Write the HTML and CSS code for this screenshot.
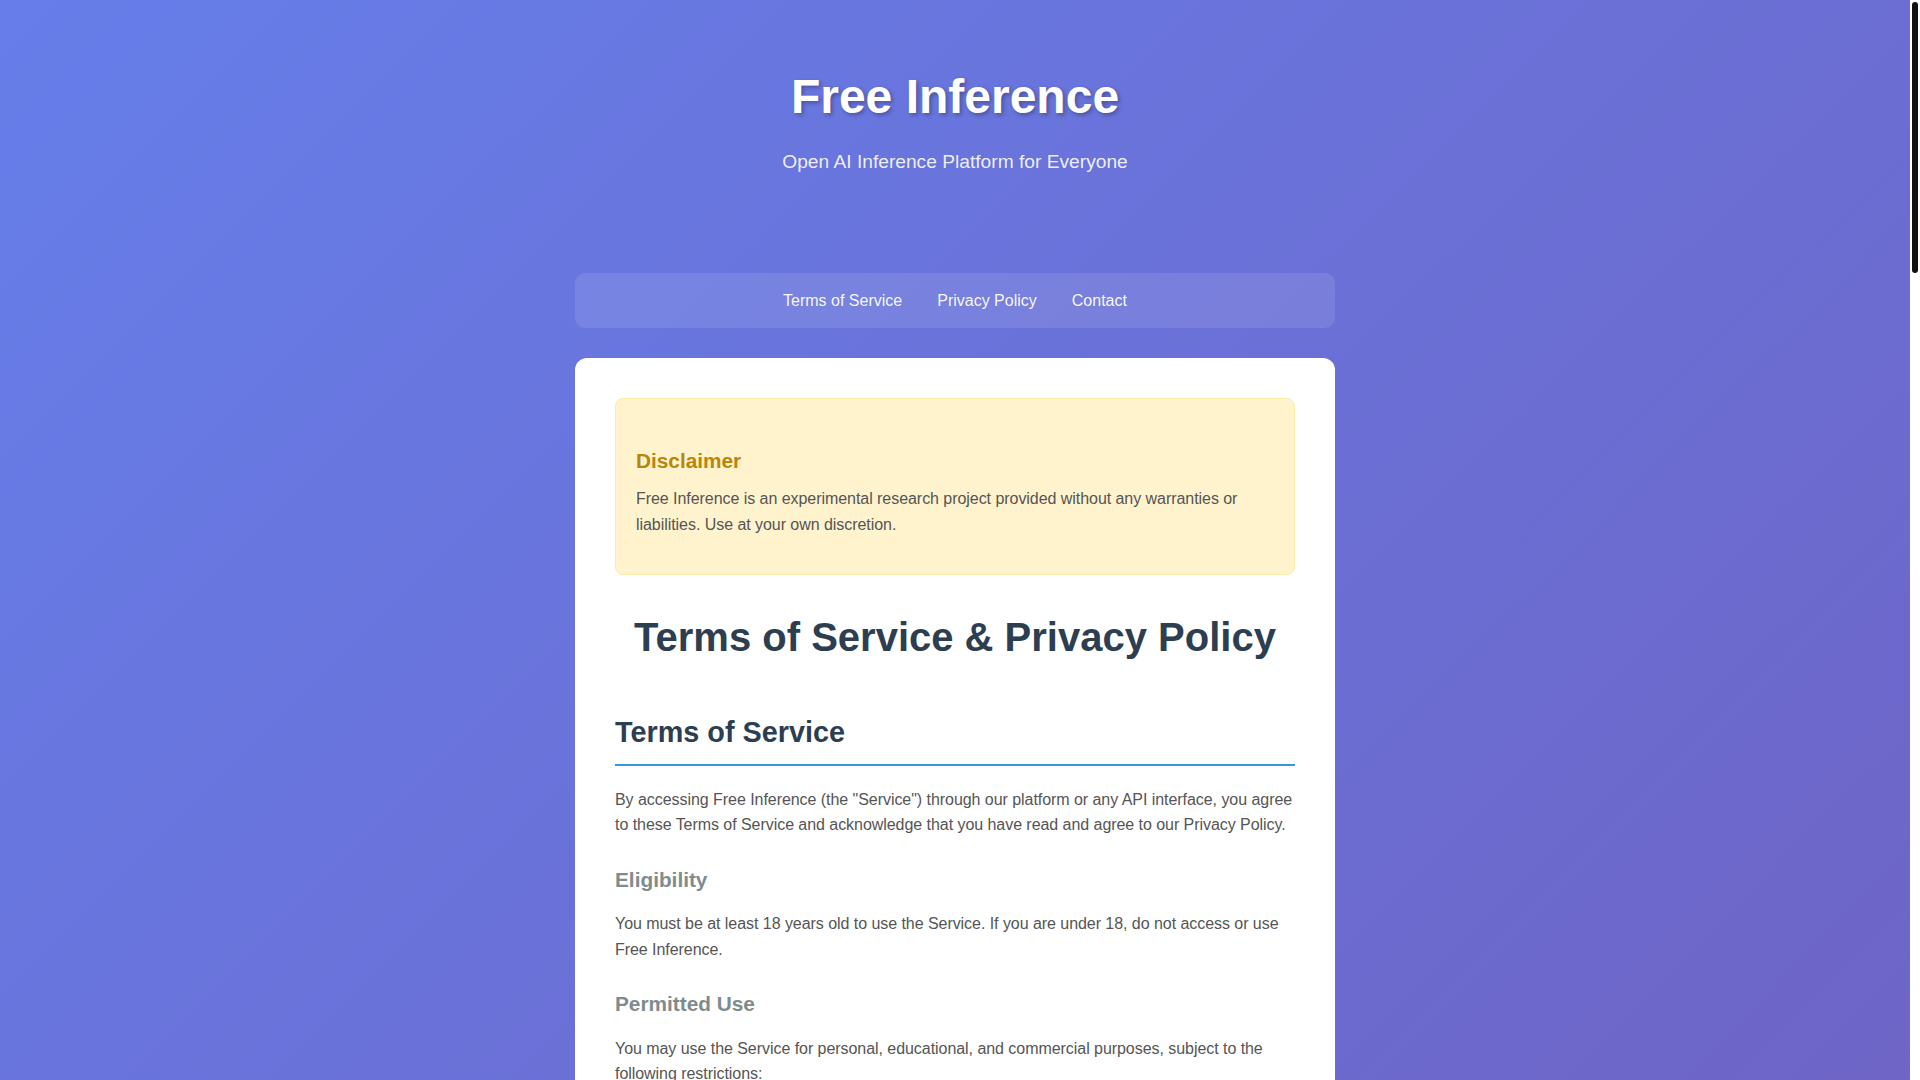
FILE: index.html
```html
<!DOCTYPE html>
<html lang="en">
<head>
<meta charset="utf-8">
<title>Free Inference - Terms of Service &amp; Privacy Policy</title>
<link rel="stylesheet" href="styles.css">
</head>
<body>
<div class="page">
  <header class="site-header">
    <h1 class="site-title">Free Inference</h1>
    <p class="site-tagline">Open AI Inference Platform for Everyone</p>
  </header>

  <nav class="site-nav">
    <a href="#terms">Terms of Service</a>
    <a href="#privacy">Privacy Policy</a>
    <a href="#contact">Contact</a>
  </nav>

  <main class="card">
    <section class="disclaimer">
      <h3 class="disclaimer-title">Disclaimer</h3>
      <p class="disclaimer-text">Free Inference is an experimental research project provided without any warranties or liabilities. Use at your own discretion.</p>
    </section>

    <h1 class="doc-title">Terms of Service &amp; Privacy Policy</h1>

    <h2 id="terms">Terms of Service</h2>
    <p>By accessing Free Inference (the "Service") through our platform or any API interface, you agree to these Terms of Service and acknowledge that you have read and agree to our Privacy Policy.</p>

    <h3>Eligibility</h3>
    <p>You must be at least 18 years old to use the Service. If you are under 18, do not access or use Free Inference.</p>

    <h3>Permitted Use</h3>
    <p>You may use the Service for personal, educational, and commercial purposes, subject to the following restrictions:</p>
    <ul>
      <li>Do not use the Service for any illegal, harmful, fraudulent, or abusive purpose.</li>
      <li>Do not attempt to disrupt, overload, or compromise the Service or its underlying infrastructure.</li>
      <li>Do not generate content that infringes intellectual property rights or violates the privacy of others.</li>
      <li>Do not use automated means to circumvent rate limits or access controls.</li>
      <li>Do not resell or redistribute access to the Service without prior written permission.</li>
    </ul>

    <h3>API Keys and Accounts</h3>
    <p>You are responsible for keeping your API keys confidential and for all activity that occurs under your keys. Notify us immediately if you believe a key has been compromised.</p>

    <h3>Service Availability</h3>
    <p>The Service is provided on a best-effort basis. We may modify, suspend, rate-limit, or discontinue any part of the Service at any time, with or without notice, and we do not guarantee uptime, latency, or model availability.</p>

    <h3>Model Outputs</h3>
    <p>Outputs are generated by machine learning models and may be inaccurate, incomplete, offensive, or otherwise unsuitable. You are solely responsible for evaluating outputs and for how you use them. Do not rely on outputs for medical, legal, financial, or other professional advice.</p>

    <h3>Intellectual Property</h3>
    <p>You retain any rights you hold in the inputs you submit. Subject to these Terms and the licenses of the underlying models, you may use the outputs you receive. The models served through the Service remain subject to their respective licenses.</p>

    <h3>Disclaimer of Warranties</h3>
    <p>The Service is provided "as is" and "as available", without warranties of any kind, whether express or implied, including warranties of merchantability, fitness for a particular purpose, and non-infringement.</p>

    <h3>Limitation of Liability</h3>
    <p>To the maximum extent permitted by law, the operators of Free Inference shall not be liable for any indirect, incidental, special, consequential, or punitive damages, or any loss of data, profits, or revenue, arising from your use of the Service.</p>

    <h3>Termination</h3>
    <p>We may suspend or terminate your access to the Service at any time, for any reason, including violation of these Terms. You may stop using the Service at any time.</p>

    <h3>Changes to These Terms</h3>
    <p>We may update these Terms from time to time. Continued use of the Service after changes are posted constitutes acceptance of the revised Terms.</p>

    <h2 id="privacy">Privacy Policy</h2>
    <p>This Privacy Policy explains what information Free Inference collects when you use the Service, how that information is used, and the choices available to you.</p>

    <h3>Information We Collect</h3>
    <ul>
      <li>Account information, such as an email address or identifier associated with your API key.</li>
      <li>Usage data, such as request timestamps, token counts, selected models, and error logs.</li>
      <li>Technical data, such as IP address, client type, and approximate location derived from your IP.</li>
    </ul>

    <h3>Prompts and Outputs</h3>
    <p>Prompts and generated outputs may be processed and temporarily stored to operate the Service, prevent abuse, and improve reliability. Do not submit sensitive personal information, credentials, or confidential data.</p>

    <h3>How We Use Information</h3>
    <p>We use collected information to provide and maintain the Service, enforce rate limits, monitor for abuse, debug issues, and conduct research on inference efficiency and system performance.</p>

    <h3>Data Sharing</h3>
    <p>We do not sell your personal information. Requests may be routed to third-party compute providers or partner infrastructure in order to serve model responses. We may disclose information if required by law.</p>

    <h3>Data Retention</h3>
    <p>Usage logs are retained only as long as necessary for operational, security, and research purposes, after which they are deleted or anonymized.</p>

    <h3>Security</h3>
    <p>We take reasonable measures to protect information, but no method of transmission or storage is completely secure, and we cannot guarantee absolute security.</p>

    <h3>Your Rights</h3>
    <p>Depending on where you live, you may have the right to access, correct, or delete your personal information. To make a request, contact us using the details below.</p>

    <h3>Changes to This Policy</h3>
    <p>We may update this Privacy Policy from time to time. The latest version will always be available on this page.</p>

    <h2 id="contact">Contact</h2>
    <p>If you have any questions about these Terms or this Privacy Policy, please reach out to the Free Inference team through the project repository or by email.</p>
    <p class="updated">Last updated: 2025</p>
  </main>

  <footer class="site-footer">
    <p>&copy; 2025 Free Inference. All rights reserved.</p>
  </footer>
</div>

<div class="scrollbar" aria-hidden="true"><div class="scrollbar-thumb"></div></div>
</body>
</html>
```

FILE: styles.css
```css
html, body {
  margin: 0;
  padding: 0;
}

body {
  font-family: "Liberation Sans", Arial, sans-serif;
  line-height: 1.6;
  color: #555;
  background: linear-gradient(135deg, #667eea 0%, #764ba2 100%);
  min-height: 100vh;
  padding-right: 10px;
}

.page {
  max-width: 760px;
  margin: 0 auto;
  padding: 0 20px;
}

/* header */
.site-header {
  text-align: center;
  padding: 59px 0 95px;
  color: #fff;
}

.site-title {
  margin: 0 0 11px;
  font-size: 48px;
  font-weight: 700;
  line-height: 1.6;
  text-shadow: 2px 2px 4px rgba(0, 0, 0, 0.3);
}

.site-tagline {
  margin: 0;
  font-size: 19.2px;
  color: rgba(255, 255, 255, 0.9);
}

/* nav */
.site-nav {
  display: flex;
  justify-content: center;
  padding: 15px;
  background: rgba(255, 255, 255, 0.1);
  border-radius: 10px;
}

.site-nav a {
  color: rgba(255, 255, 255, 0.95);
  text-decoration: none;
  font-size: 16px;
  padding: 0 17.5px;
}

/* card */
.card {
  display: block;
  margin-top: 30px;
  background: #fff;
  border-radius: 12px;
  padding: 40px;
}

.card p {
  margin: 0 0 15px;
  font-size: 16px;
  letter-spacing: -0.05px;
}

.card ul {
  margin: 0 0 15px;
  padding-left: 20px;
}

.card li {
  margin-bottom: 8px;
  letter-spacing: -0.05px;
}

.card h2 {
  margin: 40px 0 21px;
  padding-bottom: 9px;
  font-size: 28.8px;
  line-height: 1.6;
  color: #2c3e50;
  border-bottom: 2px solid #3498db;
}

.card h3 {
  margin: 25px 0 15px;
  font-size: 20.8px;
  line-height: 1.6;
  color: #7f8c8d;
}

/* disclaimer */
.disclaimer {
  background: #fff3cd;
  border: 1px solid #ffeaa7;
  border-radius: 8px;
  padding: 20px;
}

.card .disclaimer-title {
  margin: 25px 0 9px;
  color: #b8860b;
}

.card .disclaimer-text {
  margin: 0 0 16px;
}

.doc-title {
  margin: 30px 0 0;
  text-align: center;
  font-size: 40px;
  line-height: 1.6;
  color: #2c3e50;
}

.card .updated {
  margin-top: 30px;
  font-style: italic;
  color: #7f8c8d;
}

/* footer */
.site-footer {
  text-align: center;
  color: rgba(255, 255, 255, 0.8);
  padding: 30px 0 40px;
}

.site-footer p {
  margin: 0;
}

/* scrollbar strip shown at the right edge of the window */
.scrollbar {
  position: fixed;
  top: 0;
  right: 0;
  width: 10px;
  height: 100vh;
  background: #fff;
}

.scrollbar-thumb {
  margin: 2px 2px 0 2px;
  height: 271px;
  background: #111;
  border-radius: 3px;
}
```
